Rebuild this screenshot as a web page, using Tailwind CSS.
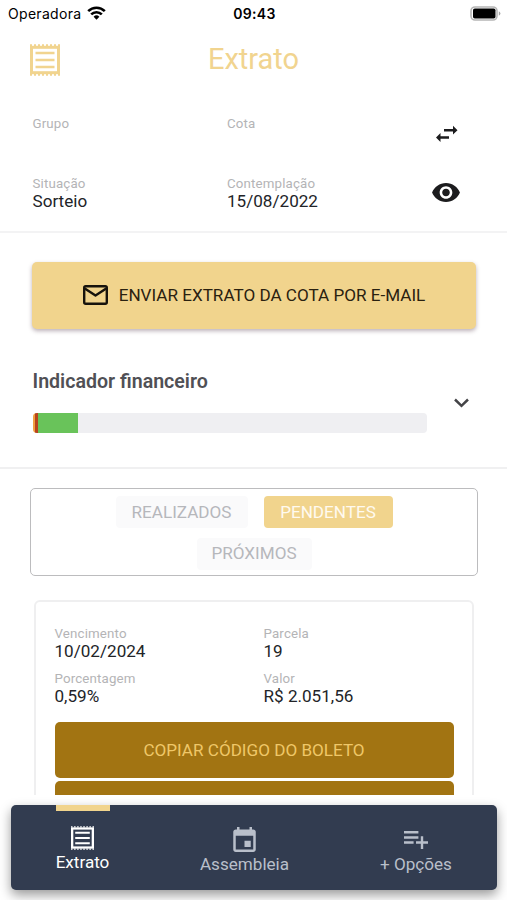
<!DOCTYPE html>
<html lang="pt-BR">
  <head>
    <meta charset="UTF-8" />
    <meta name="viewport" content="width=device-width, initial-scale=1.0" />
    <title>Extrato</title>
    <script src="https://cdn.jsdelivr.net/npm/@tailwindcss/browser@4"></script>
  </head>
  <body class="bg-white font-['Roboto',sans-serif] text-[#222428]">
    <div class="flex h-[900px] w-[507px] flex-col overflow-hidden">
      <!-- Status bar -->
      <div class="grid h-[27px] shrink-0 grid-cols-3 items-center pl-[8px] pr-[6px] font-['Inter',sans-serif] text-black">
        <div class="flex items-center gap-[6px]">
          <span class="text-[14px] tracking-[0.3px]">Operadora</span>
          <svg class="mb-[2px] h-[14px] w-[19px]" viewBox="0 0 19 14" fill="none" stroke="currentColor" stroke-width="2.6">
            <path d="M1.2 5.2a11.8 11.8 0 0 1 16.6 0" />
            <path d="M4.2 8.4a7.5 7.5 0 0 1 10.6 0" />
            <path d="M9.5 13.8L6.6 10.8a4.1 4.1 0 0 1 5.8 0z" fill="currentColor" stroke="none" />
          </svg>
        </div>
        <span class="text-center text-[14px] font-semibold tracking-[0.3px]">09:43</span>
        <svg class="mb-[1px] h-[15px] w-[31px] justify-self-end" viewBox="0 0 31 15">
          <rect x="1" y="1" width="26" height="13" rx="4" fill="#fff" stroke="#b5b5b5" stroke-width="1.6" />
          <rect x="3" y="2.5" width="22.5" height="10" rx="1.8" fill="#000" />
          <path d="M28.8 5.3q1.6.8 1.6 2.2t-1.6 2.2z" fill="#a5a5a5" />
        </svg>
      </div>

      <!-- Header -->
      <header class="grid h-[66px] shrink-0 grid-cols-[60px_1fr_60px] items-center text-[#f1d48f]">
        <svg class="mb-[1px] ml-[30px] h-[32px] w-[30px]" viewBox="0 0 30 32" fill="none" stroke="currentColor">
          <rect x="1.500" y="3.300" width="27" height="25.400" stroke-width="3" />
          <path d="M0 1.200h30M0 30.800h30" stroke-width="1.800" stroke-dasharray="2 2" />
          <path d="M5.500 9h19M5.500 16h19M5.500 23h19" stroke-width="2.400" />
        </svg>
        <h1 class="mb-[1px] text-center text-[29px] leading-none">Extrato</h1>
      </header>

      <!-- Cota -->
      <section class="flex h-[140px] shrink-0 border-b-2 border-[#f3f3f4] pl-[32.5px]">
        <div class="grid w-[389px] grid-cols-2 grid-rows-[60px_60px] pt-[22px] text-[17.1px] leading-[18px]">
          <div>
            <p class="text-[13.3px] leading-[17px] tracking-[0.15px] text-[#b4b4b6]">Grupo</p>
          </div>
          <div>
            <p class="text-[13.3px] leading-[17px] tracking-[0.15px] text-[#b4b4b6]">Cota</p>
          </div>
          <div>
            <p class="text-[13.3px] leading-[17px] tracking-[0.15px] text-[#b4b4b6]">Situação</p>
            <p>Sorteio</p>
          </div>
          <div>
            <p class="text-[13.3px] leading-[17px] tracking-[0.15px] text-[#b4b4b6]">Contemplação</p>
            <p>15/08/2022</p>
          </div>
        </div>
        <div class="flex w-[49px] flex-col items-center gap-[41px] pt-[32px] text-[#1c1c1e]">
          <svg class="h-[17px] w-[23px]" viewBox="0 0 23 17" fill="currentColor">
            <path d="M9 4h9V.8l4.500 4.400L18 9.600V6.400H9zM14 11.300H5.500V8L1 12.500l4.500 4.400v-3.200H14z" />
          </svg>
          <svg class="h-[19px] w-[28px]" viewBox="1 4.500 22 15" fill="currentColor">
            <path d="M12 4.500C7 4.500 2.730 7.610 1 12c1.730 4.390 6 7.500 11 7.500s9.270-3.110 11-7.500c-1.730-4.390-6-7.500-11-7.500zM12 17c-2.760 0-5-2.240-5-5s2.240-5 5-5 5 2.240 5 5-2.240 5-5 5zm0-8c-1.660 0-3 1.340-3 3s1.340 3 3 3 3-1.340 3-3-1.340-3-3-3z" />
          </svg>
        </div>
      </section>

      <!-- Enviar por e-mail -->
      <section class="shrink-0 px-[32px] pt-[29px]">
        <button class="flex h-[67px] w-[444px] items-center justify-center gap-[11px] rounded-[5px] bg-[#f1d48d] text-[17.1px] text-[#2a2110] shadow-[0_2px_4px_rgba(60,30,50,0.35)]">
          <svg class="mb-[1px] h-[20px] w-[25px]" viewBox="0 0 25 20" fill="none" stroke="#17130c" stroke-width="2.400" stroke-linejoin="round">
            <rect x="1.200" y="1.200" width="22.600" height="17.600" rx="1.500" />
            <path d="M1.800 3.500l10.700 7 10.700-7" />
          </svg>
          <span>ENVIAR EXTRATO DA COTA POR E-MAIL</span>
        </button>
      </section>

      <!-- Indicador financeiro -->
      <section class="flex h-[140px] shrink-0 border-b-2 border-[#f0f0f1] pl-[32.5px] pt-[41px]">
        <div class="w-[394px]">
          <h2 class="text-[19.6px] font-semibold leading-[24px] text-[#505055]">Indicador financeiro</h2>
          <div class="mt-[18.5px] flex h-[20px] overflow-hidden rounded-[4px] bg-[#efeff2]">
            <div class="w-[2.5px] bg-[#f0a040]"></div>
            <div class="w-[3px] bg-[#b8441c]"></div>
            <div class="w-[40px] bg-[#69c35a]"></div>
          </div>
        </div>
        <svg class="ml-[27px] mt-[28px] h-[10px] w-[15px]" viewBox="0 0 15 10" fill="none" stroke="#444447" stroke-width="2.500">
          <path d="M1 1.500l6.500 6.300L14 1.500" />
        </svg>
      </section>

      <!-- Filtro -->
      <section class="mx-[30px] mt-[19px] flex h-[88px] w-[448px] shrink-0 flex-col items-center gap-[10px] rounded-[5px] border-[1.500px] border-[#bcbcbe] pt-[6.500px] text-[17.1px] text-[#b6b7bb]">
        <div class="flex gap-[16px]">
          <button class="h-[32px] w-[132px] rounded-[4px] bg-[#fafafb] pt-[2px]">REALIZADOS</button>
          <button class="h-[32px] w-[129px] rounded-[4px] bg-[#f1d48d] pt-[2px] text-[#fffaf0]">PENDENTES</button>
        </div>
        <button class="h-[32px] w-[115px] rounded-[4px] bg-[#fafafb] pt-[1px]">PRÓXIMOS</button>
      </section>

      <!-- Parcela -->
      <section class="ml-[34px] mt-[24px] h-[195px] w-[440px] shrink-0 overflow-hidden">
        <div class="h-[260px] rounded-[6px] border-2 border-[#efeff0] px-[18.5px] pt-[23px]">
          <div class="grid grid-cols-[209px_1fr] grid-rows-[45px_52px] text-[17.1px] leading-[18px]">
            <div>
              <p class="text-[13.3px] leading-[17px] tracking-[0.15px] text-[#b4b4b6]">Vencimento</p>
              <p>10/02/2024</p>
            </div>
            <div>
              <p class="text-[13.3px] leading-[17px] tracking-[0.15px] text-[#b4b4b6]">Parcela</p>
              <p>19</p>
            </div>
            <div>
              <p class="text-[13.3px] leading-[17px] tracking-[0.15px] text-[#b4b4b6]">Porcentagem</p>
              <p>0,59%</p>
            </div>
            <div>
              <p class="text-[13.3px] leading-[17px] tracking-[0.15px] text-[#b4b4b6]">Valor</p>
              <p>R$ 2.051,56</p>
            </div>
          </div>
          <div class="flex w-[399px] flex-col gap-[3px]">
            <button class="h-[56px] rounded-[5px] bg-[#a27412] pt-[1px] text-[17.1px] text-[#efc768]">COPIAR CÓDIGO DO BOLETO</button>
            <div class="h-[56px] rounded-[5px] bg-[#a27412]"></div>
          </div>
        </div>
      </section>

      <!-- Bottom navigation -->
      <nav class="ml-[11px] mt-[10px] flex h-[85px] w-[486px] shrink-0 rounded-[5px] bg-[#323c50] text-[17.1px] leading-[20px] text-[#b9bfca] shadow-[0_5px_12px_rgba(0,0,0,0.4)]">
        <a class="flex w-[143px] flex-col items-center text-white">
          <span class="h-[6px] w-[54px] bg-[#f1d48d]"></span>
          <svg class="mt-[15px] h-[24px] w-[23px]" viewBox="0 0 30 32" preserveAspectRatio="none" fill="none" stroke="currentColor">
            <rect x="1.500" y="3.300" width="27" height="25.400" stroke-width="3" />
            <path d="M0 1.200h30M0 30.800h30" stroke-width="1.800" stroke-dasharray="2 2" />
            <path d="M5.500 9h19M5.500 16h19M5.500 23h19" stroke-width="2.600" />
          </svg>
          <span class="mt-[2px]">Extrato</span>
        </a>
        <a class="flex w-[181px] flex-col items-center pt-[22px]">
          <svg class="h-[25px] w-[23px]" viewBox="3 1 18 20" fill="currentColor">
            <path d="M17 12h-5v5h5v-5zM16 1v2H8V1H6v2H5c-1.110 0-1.990.9-1.990 2L3 19c0 1.100.890 2 2 2h14c1.100 0 2-.9 2-2V5c0-1.100-.9-2-2-2h-1V1h-2zm3 18H5V8h14v11z" />
          </svg>
          <span class="mt-[2px]">Assembleia</span>
        </a>
        <a class="flex w-[162px] flex-col items-center pt-[26px]">
          <svg class="h-[18px] w-[24px]" viewBox="2 6 20 14" preserveAspectRatio="none" fill="currentColor">
            <path d="M14 10H2v2h12v-2zm0-4H2v2h12V6zm4 8v-4h-2v4h-4v2h4v4h2v-4h4v-2h-4zM2 16h8v-2H2v2z" />
          </svg>
          <span class="mt-[5px]">+ Opções</span>
        </a>
      </nav>
    </div>
  </body>
</html>
